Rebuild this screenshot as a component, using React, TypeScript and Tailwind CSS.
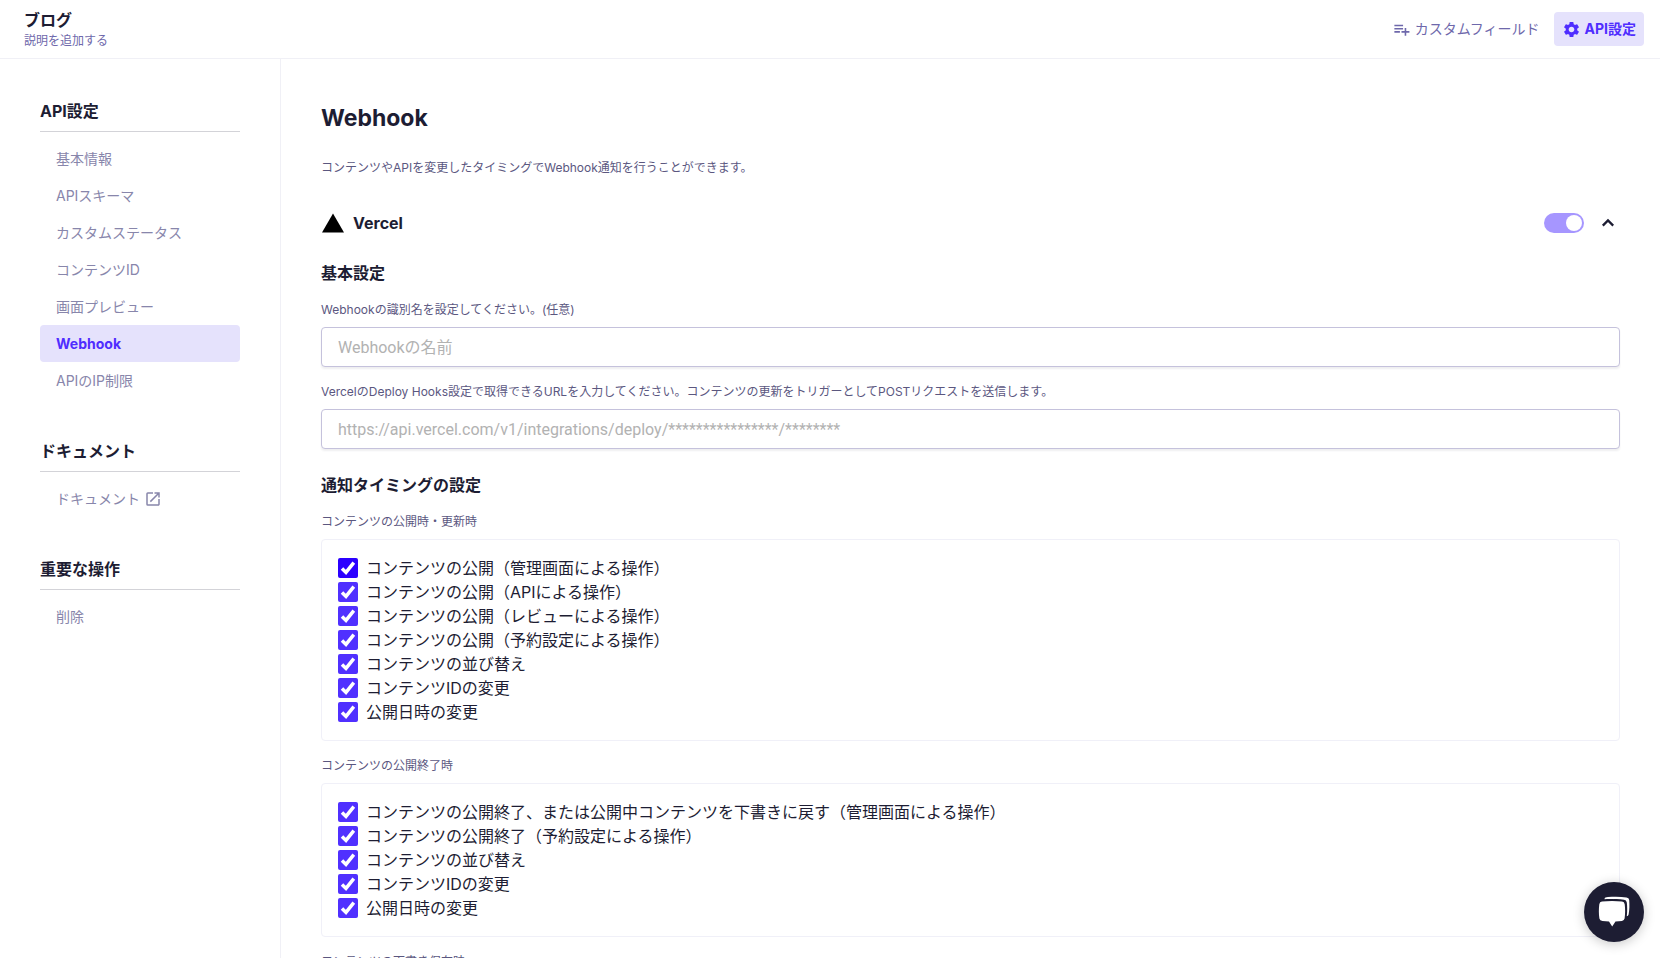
import { useState } from "react";
import type { ReactNode } from "react";
import { MdOpenInNew, MdPlaylistAdd, MdSettings } from "react-icons/md";

const apiMenu = [
  "基本情報",
  "APIスキーマ",
  "カスタムステータス",
  "コンテンツID",
  "画面プレビュー",
  "Webhook",
  "APIのIP制限",
];

const timingGroups = [
  {
    title: "コンテンツの公開時・更新時",
    items: [
      "コンテンツの公開（管理画面による操作）",
      "コンテンツの公開（APIによる操作）",
      "コンテンツの公開（レビューによる操作）",
      "コンテンツの公開（予約設定による操作）",
      "コンテンツの並び替え",
      "コンテンツIDの変更",
      "公開日時の変更",
    ],
  },
  {
    title: "コンテンツの公開終了時",
    items: [
      "コンテンツの公開終了、または公開中コンテンツを下書きに戻す（管理画面による操作）",
      "コンテンツの公開終了（予約設定による操作）",
      "コンテンツの並び替え",
      "コンテンツIDの変更",
      "公開日時の変更",
    ],
  },
  {
    title: "コンテンツの下書き保存時",
    items: ["コンテンツの下書き保存（管理画面による操作）", "コンテンツの下書き保存（APIによる操作）"],
  },
];

function Header() {
  return (
    <header className="flex shrink-0 items-center justify-between border-b border-[#f0f0f6] pr-4 pl-6">
      <div className="flex h-[58px] flex-col justify-center">
        <h1 className="text-base leading-6 font-bold">ブログ</h1>
        <a href="#description" className="text-xs leading-[18px] text-[#6e68ab]">
          説明を追加する
        </a>
      </div>
      <div className="flex items-center gap-1.5">
        <button type="button" className="flex h-[34px] items-center gap-1 px-2 text-sm text-[#6e68ab]">
          <MdPlaylistAdd size={19} aria-hidden="true" />
          カスタムフィールド
        </button>
        <button
          type="button"
          className="flex h-[34px] items-center gap-1 rounded bg-[#e5e2fc] px-2 text-sm font-bold text-[#4f2dff]"
        >
          <MdSettings size={19} aria-hidden="true" />
          API設定
        </button>
      </div>
    </header>
  );
}

function MenuSection({ title, children }: { title: string; children: ReactNode }) {
  return (
    <section className="mt-10">
      <h2 className="mb-2 border-b border-[#d3d3d8] pb-2 text-base leading-6 font-bold">{title}</h2>
      <ul>{children}</ul>
    </section>
  );
}

function MenuItem({ label, active, external }: { label: string; active?: boolean; external?: boolean }) {
  const tone = active ? "bg-[#e5e2fc] font-bold text-[#4f2dff]" : "text-[#8886ab]";
  return (
    <li>
      <a href="#menu" className={`flex h-[37px] items-center gap-1 rounded px-4 text-sm ${tone}`}>
        {label}
        {external && <MdOpenInNew size={18} aria-hidden="true" />}
      </a>
    </li>
  );
}

function Sidebar() {
  return (
    <nav className="w-[281px] shrink-0 border-r border-[#f0f0f6] px-10">
      <MenuSection title="API設定">
        {apiMenu.map((label) => (
          <MenuItem key={label} label={label} active={label === "Webhook"} />
        ))}
      </MenuSection>
      <MenuSection title="ドキュメント">
        <MenuItem label="ドキュメント" external />
      </MenuSection>
      <MenuSection title="重要な操作">
        <MenuItem label="削除" />
      </MenuSection>
    </nav>
  );
}

function Field({ id, label, placeholder }: { id: string; label: string; placeholder: string }) {
  return (
    <div className="mt-4">
      <label htmlFor={id} className="mb-2 block text-xs leading-[18px] text-[#5b577f]">
        {label}
      </label>
      <input
        id={id}
        type="text"
        placeholder={placeholder}
        className="block h-10 w-full rounded border border-[#c5c2dc] bg-white px-4 font-['Roboto','Noto_Sans_CJK_JP',sans-serif] text-base shadow-[0_2px_2px_rgba(30,30,50,0.07)] outline-none placeholder:text-[#b2b2b2]"
      />
    </div>
  );
}

function CheckRow({ label, strong }: { label: string; strong: boolean }) {
  const fill = strong ? "checked:bg-[#2b00ff]" : "checked:bg-[#5030ff]";
  return (
    <label className="flex h-6 items-center gap-2 text-base">
      <span className="grid size-5 shrink-0">
        <input
          type="checkbox"
          defaultChecked
          className={`peer col-start-1 row-start-1 size-5 appearance-none rounded-xs border border-[#c5c2dc] checked:border-0 ${fill}`}
        />
        <svg
          viewBox="0 0 20 20"
          aria-hidden="true"
          className="pointer-events-none invisible col-start-1 row-start-1 size-5 peer-checked:visible"
        >
          <path d="M4 10.4 8 14.4 15.8 4.6" fill="none" stroke="#fff" strokeWidth="3.5" />
        </svg>
      </span>
      {label}
    </label>
  );
}

function CheckGroup({ title, items, first }: { title: string; items: string[]; first: boolean }) {
  return (
    <fieldset className="mt-4">
      <legend className="mb-2 text-xs leading-[18px] text-[#5b577f]">{title}</legend>
      <div className="rounded border border-[#f0f0f8] p-4">
        {items.map((item, i) => (
          <CheckRow key={item} label={item} strong={first && i === 0} />
        ))}
      </div>
    </fieldset>
  );
}

function ServiceRow({ open, onToggle }: { open: boolean; onToggle: () => void }) {
  return (
    <div className="mt-[33px] flex h-7 items-center">
      <svg viewBox="0 0 24 24" className="size-6" aria-hidden="true">
        <path d="M12 2.4 23 21.6H1z" fill="#000" />
      </svg>
      <h3 className="ml-2 flex-1 text-base font-bold">Vercel</h3>
      <input
        type="checkbox"
        role="switch"
        aria-label="Vercel"
        defaultChecked
        className="flex h-5 w-10 appearance-none items-center rounded-full bg-[#cfcde0] px-0.5 before:size-4 before:rounded-full before:bg-white checked:justify-end checked:bg-[#a696ff]"
      />
      <button type="button" aria-label="開閉" aria-expanded={open} onClick={onToggle} className="ml-3 size-6">
        <svg viewBox="0 0 24 24" className={open ? "size-6" : "size-6 rotate-180"} aria-hidden="true">
          <path d="M6.800 14.600 12 9.400l5.200 5.200" fill="none" stroke="currentColor" strokeWidth="2.300" />
        </svg>
      </button>
    </div>
  );
}

function ChatButton() {
  return (
    <button
      type="button"
      aria-label="チャット"
      className="fixed right-4 bottom-4 flex size-[60px] items-center justify-center rounded-full bg-[#1d1d33] shadow-[0_2px_12px_rgba(0,0,0,0.22)]"
    >
      <svg viewBox="0 0 32 32" className="size-8" fill="#fff" aria-hidden="true">
        <path d="M6.500 3.200C6.500 1.600 8 1.200 10 1.100C16 .6 23 .7 28.500 1.400Q31 1.700 31.200 4C31.600 9 31.500 14 30.600 18.500Q30.200 20 28.800 20.300C29.400 15 29.300 10.500 28.800 6.500Q28.500 4 26 3.800C19 3.100 12 3 6.500 3.200z" />
        <path d="M4 5.600C10 4.900 18 4.900 24 5.600Q26.400 5.900 26.700 8.300C27.300 13 27.300 18 26.600 22.600Q26.200 24.600 24 24.900L17.500 25.400 14.200 30.400 11 25.400 4.500 24.900Q1.800 24.600 1.400 22.500C.7 18 .7 13 1.300 8.300Q1.600 5.900 4 5.600z" />
      </svg>
    </button>
  );
}

export default function App() {
  const [open, setOpen] = useState(true);
  return (
    <div className="flex h-screen flex-col bg-white font-['Inter','Noto_Sans_CJK_JP',sans-serif] text-[#1d1d33]">
      <Header />
      <div className="flex min-h-0 flex-1">
        <Sidebar />
        <main className="min-w-0 flex-1 overflow-y-auto px-10 py-10 [scrollbar-width:none]">
          <h2 className="text-[23px] leading-[38px] font-bold">Webhook</h2>
          <p className="mt-[23px] text-xs leading-4 text-[#5b577f]">
            コンテンツやAPIを変更したタイミングでWebhook通知を行うことができます。
          </p>
          <ServiceRow open={open} onToggle={() => setOpen(!open)} />
          {open && (
            <>
              <h4 className="mt-6 text-base leading-6 font-bold">基本設定</h4>
              <Field id="name" label="Webhookの識別名を設定してください。(任意)" placeholder="Webhookの名前" />
              <Field
                id="url"
                label="VercelのDeploy Hooks設定で取得できるURLを入力してください。コンテンツの更新をトリガーとしてPOSTリクエストを送信します。"
                placeholder="https://api.vercel.com/v1/integrations/deploy/****************/********"
              />
              <h4 className="mt-6 text-base leading-6 font-bold">通知タイミングの設定</h4>
              {timingGroups.map((group, i) => (
                <CheckGroup key={group.title} title={group.title} items={group.items} first={i === 0} />
              ))}
            </>
          )}
        </main>
      </div>
      <ChatButton />
    </div>
  );
}
